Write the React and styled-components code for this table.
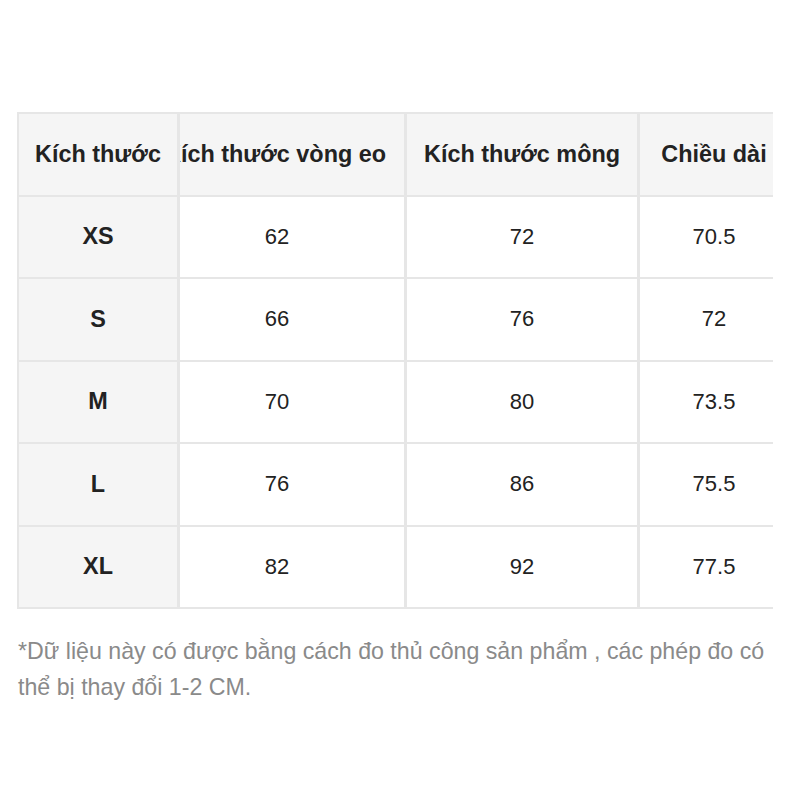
import React from "react";
import styled, { createGlobalStyle } from "styled-components";

const GlobalStyle = createGlobalStyle`
  body {
    margin: 0;
    background: #ffffff;
    font-family: "Liberation Sans", Arial, sans-serif;
  }
`;

const headers = ["Kích thước", "Kích thước vòng eo", "Kích thước mông", "Chiều dài"];

const rows = [
  ["XS", "62", "72", "70.5"],
  ["S", "66", "76", "72"],
  ["M", "70", "80", "73.5"],
  ["L", "76", "86", "75.5"],
  ["XL", "82", "92", "77.5"],
];

export default function App() {
  return (
    <Page>
      <GlobalStyle />
      <Scroller>
        <Grid>
          {headers.map((h, i) => (
            <Cell key={h} $col={i} $head>
              {h}
            </Cell>
          ))}
          {rows.map((row) =>
            row.map((v, i) => (
              <Cell key={row[0] + i} $col={i}>
                {v}
              </Cell>
            ))
          )}
        </Grid>
      </Scroller>
      <Note>
        *Dữ liệu này có được bằng cách đo thủ công sản phẩm , các phép đo có
        thể bị thay đổi 1-2 CM.
      </Note>
    </Page>
  );
}

const Page = styled.div`
  padding: 112px 27px 0 17px;
  width: 800px;
  box-sizing: border-box;
`;

const Scroller = styled.div`
  width: 756px;
  overflow: hidden;
`;

const Grid = styled.div`
  display: grid;
  grid-template-columns: 158px 224px 230px 148px;
  grid-auto-rows: 80.5px;
  column-gap: 3px;
  row-gap: 2px;
  padding: 2px 0 2px 2px;
  width: max-content;
  background: #e6e6e6;
`;

const Cell = styled.div`
  display: flex;
  align-items: center;
  justify-content: center;
  overflow: hidden;
  white-space: nowrap;
  color: #222222;
  font-size: ${(p) => (p.$head || p.$col === 0 ? "23.4px" : "22px")};
  font-weight: ${(p) => (p.$head || p.$col === 0 ? 700 : 400)};
  background: ${(p) => (p.$head || p.$col === 0 ? "#f5f5f5" : "#ffffff")};
  padding-right: ${(p) => (p.$col === 1 ? (p.$head ? "34px" : "30px") : "0")};
`;

const Note = styled.p`
  margin: 24px 0 0 1px;
  font-size: 23.2px;
  line-height: 36px;
  color: #8a8a8a;
`;
